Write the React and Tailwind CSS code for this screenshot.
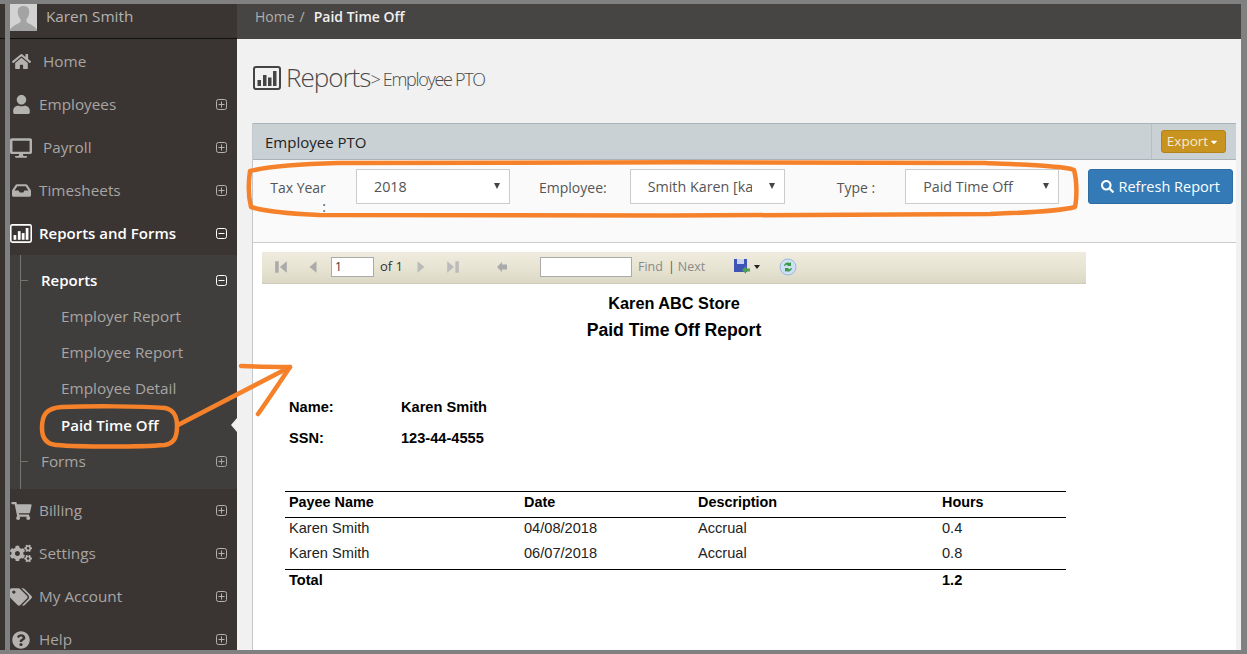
import { FaHome, FaUser, FaDesktop, FaInbox, FaShoppingCart, FaCogs, FaTags, FaQuestionCircle, FaSearch, FaCaretDown } from "react-icons/fa";

const BoxChart = ({ className }) => (
  <svg viewBox="0 0 28 24" className={className} fill="none">
    <rect x="1" y="1" width="26" height="22" rx="2" stroke="currentColor" strokeWidth="2" />
    <rect x="4.5" y="14" width="3.5" height="6" fill="currentColor" />
    <rect x="10" y="9" width="3.5" height="11" fill="currentColor" />
    <rect x="15" y="11.5" width="3.5" height="8.5" fill="currentColor" />
    <rect x="20" y="5" width="3.5" height="15" fill="currentColor" />
  </svg>
);

const PlusBox = ({ open }) => (
  <svg viewBox="0 0 11 11" className="w-[11px] h-[11px]" fill="none" stroke="currentColor" strokeWidth="1">
    <rect x="0.5" y="0.5" width="10" height="10" rx="2" />
    <path d="M2.5 5.5h6" />
    {!open && <path d="M5.5 2.5v6" />}
  </svg>
);

const Avatar = () => (
  <div className="w-[27px] h-[27px] bg-[#d2d2d2] overflow-hidden">
    <svg viewBox="0 0 27 27" className="w-full h-full">
      <path d="M13.5 2c-4 0-6 2.6-5.700 6.500.2 3 1.200 5 2.700 6.500v3c-2.500 2-7 3-10.500 7.500V27h27v-1.500c-3.500-4.500-8-5.500-10.500-7.500v-3c1.500-1.500 2.500-3.500 2.700-6.500C19.500 4.600 17.500 2 13.500 2z" fill="#a3a3a3" />
    </svg>
  </div>
);

const MainItem = ({ icon, label, iconGap, active, open, noToggle }) => (
  <div className={`flex items-center h-[43px] pr-[10px] ${active ? "text-[15px] text-white font-semibold" : "text-[15.300px] text-[#a8a5a3]"}`}>
    <span className={`flex justify-center items-center w-[22px] shrink-0 ${active ? "text-white" : "text-[#b4b2b0]"}`}>{icon}</span>
    <span className={`flex-1 ${iconGap}`}>{label}</span>
    {!noToggle && <span className={active ? "text-white" : "text-[#b4b2b0]"}><PlusBox open={open} /></span>}
  </div>
);

const SubItem = ({ label, bold, active, open, tick, toggle, className = "" }) => (
  <div className={`relative flex items-center h-[36px] pr-[10px] ${tick ? "pl-[31px]" : "pl-[51px]"} ${bold || active ? "text-[15px] text-white font-semibold" : "text-[15.300px] text-[#a8a5a3]"} ${className}`}>
    {tick && <span className="absolute left-[10px] top-[18px] w-[8px] h-px bg-[#77736f]" />}
    <span className={`flex-1 ${bold || active ? "" : "pt-px"}`}>{label}</span>
    {toggle && <PlusBox open={open} />}
    {active && <span className="absolute right-0 top-[11px] border-y-[7px] border-r-[6px] border-y-transparent border-r-[#f1f1f1]" />}
  </div>
);

const Select = ({ value, className }) => (
  <div className={`relative flex items-center h-[35px] pl-[17px] pt-[1px] bg-white border border-[#ccc] text-[14.300px] text-[#555] overflow-hidden ${className}`}>
    <span className="whitespace-nowrap">{value}</span>
    <span className="absolute right-0 top-0 h-full w-[32px] bg-white" />
    <span className="absolute right-[9px] top-[13px] border-x-[3px] border-t-[6px] border-x-transparent border-t-[#444]" />
  </div>
);

const columns = "grid grid-cols-[235px_174px_244px_128px] pl-[4px]";

const rows = [
  { name: "Karen Smith", date: "04/08/2018", desc: "Accrual", hours: "0.4" },
  { name: "Karen Smith", date: "06/07/2018", desc: "Accrual", hours: "0.8" },
];

const App = () => {
  return (
    <div className="relative flex w-[1247px] h-[654px] overflow-hidden bg-[#808080] font-['Open_Sans',sans-serif]">
      {/* left edge of the window behind */}
      <div className="w-[5px] mt-[4px] mb-[4px] bg-[#39342f] relative">
        <div className="absolute left-0 right-0 top-[34px] h-px bg-[#111]" />
      </div>
      <div className="ml-[5px] flex flex-col w-[1231px] my-[4px] flex-none">
        <div className="flex flex-1 min-h-0">
          {/* sidebar */}
          <aside className="w-[227px] shrink-0 bg-[#3a3533] overflow-hidden">
            <div className="flex items-start h-[35px] mb-px border-b border-[#111]">
              <Avatar />
              <span className="ml-[9px] text-[15.300px] leading-[25px] text-[#b4b2b0]">Karen Smith</span>
            </div>
            <MainItem icon={<FaHome className="w-[19px] h-[17px]" />} label="Home" iconGap="ml-[11px]" noToggle />
            <MainItem icon={<FaUser className="w-[17px] h-[19px]" />} label="Employees" iconGap="ml-[7px]" />
            <MainItem icon={<FaDesktop className="w-[23px] h-[20px]" />} label="Payroll" iconGap="ml-[11px]" />
            <MainItem icon={<FaInbox className="w-[19px] h-[17px]" />} label="Timesheets" iconGap="ml-[7px]" />
            <MainItem icon={<BoxChart className="w-[22px] h-[19px]" />} label="Reports and Forms" iconGap="ml-[7px]" active open />
            <div className="relative bg-[#403e3d] pt-[7px] pb-[10px]">
              <span className="absolute left-[10px] top-0 bottom-0 w-px bg-[#77736f]" />
              <SubItem label="Reports" bold open tick toggle />
              <SubItem label="Employer Report" />
              <SubItem label="Employee Report" />
              <SubItem label="Employee Detail" />
              <SubItem label="Paid Time Off" active className="mt-px" />
              <SubItem label="Forms" tick toggle />
            </div>
            <MainItem icon={<FaShoppingCart className="w-[21px] h-[18px]" />} label="Billing" iconGap="ml-[7px]" />
            <MainItem icon={<FaCogs className="w-[22px] h-[19px]" />} label="Settings" iconGap="ml-[7px]" />
            <MainItem icon={<FaTags className="w-[22px] h-[18px]" />} label="My Account" iconGap="ml-[7px]" />
            <MainItem icon={<FaQuestionCircle className="w-[18px] h-[18px]" />} label="Help" iconGap="ml-[7px]" />
          </aside>

          {/* main column */}
          <main className="flex-1 min-w-0 bg-[#f1f1f1] flex flex-col">
            <div className="h-[35px] shrink-0 bg-[#474543] pl-[18px] pt-[1px] text-[14px] leading-[24px] text-[#b0aeac]">
              Home<span className="ml-[5px]">/</span>
              <span className="ml-[9px] text-[#f0f0f0] font-semibold">Paid Time Off</span>
            </div>

            <div className="flex items-center h-[84px] shrink-0 pl-[16px] pb-[7px] text-[#4a4a4a]">
              <BoxChart className="w-[28px] h-[24px] text-[#444]" />
              <span className="ml-[5px] text-[26px] font-light tracking-[-1px]">Reports</span>
              <span className="text-[18px] font-light tracking-[-1.300px] mt-[3px]">&gt; Employee PTO</span>
            </div>

            <section className="flex-1 min-h-0 ml-[15px] mr-[5px] border-l border-[#c4c8ca] flex flex-col">
              <div className="flex items-center justify-between h-[37px] shrink-0 bg-[#c9d1d4] border-y border-[#aab4b8] pl-[12px] text-[#222] text-[15px]">
                <span className="pt-px">Employee PTO</span>
                <div className="flex items-center justify-center h-full w-[85px] pr-[2px] border-l border-[#b6bfc2]">
                  <span className="flex items-center h-[23px] w-[65px] justify-center rounded-[3px] bg-[#c8931f] border border-[#b48218] text-[13.500px] text-[#f6ebd2]">
                    Export<FaCaretDown className="w-[10px] h-[10px] ml-[1px] text-white" />
                  </span>
                </div>
              </div>

              <div className="h-[83px] shrink-0 bg-[#fafafa] border-b border-[#ccc] flex items-start pt-[9px] text-[14px] text-[#555]">
                <div className="w-[58px] ml-[16px] leading-[20px] pt-[9px] text-center">Tax Year<br /><span className="block text-right pr-[1px] -mt-px">:</span></div>
                <Select value="2018" className="w-[154px] ml-[29px]" />
                <span className="ml-[29px] mt-[9px] leading-[20px]">Employee:</span>
                <Select value="Smith Karen [karen]" className="w-[155px] ml-[23px]" />
                <span className="ml-[52px] mt-[9px] leading-[20px]">Type :</span>
                <Select value="Paid Time Off" className="w-[154px] ml-[30px]" />
                <button className="flex items-center justify-center gap-[4px] h-[35px] w-[145px] ml-[29px] rounded-[3px] bg-[#337ab7] border border-[#2e6da4] text-white text-[14.500px]">
                  <FaSearch className="w-[13px] h-[13px]" />Refresh Report
                </button>
              </div>

              {/* report viewer */}
              <div className="flex-1 min-h-0 bg-white pt-[9px] font-['Liberation_Sans',sans-serif] text-[14.600px] text-[#111]">
                <div className="flex items-center w-[824px] h-[32px] ml-[9px] pb-px bg-gradient-to-b from-[#efebde] via-[#e8e4d3] to-[#dcd8c6] border-b border-[#cfcbbb] text-[#333] relative">
                  <svg viewBox="0 0 12 12" className="w-[14px] h-[14px] ml-[12px] text-[#aaa]" fill="currentColor"><path d="M1 1h3v10H1zM11 1v10L5 6z" /></svg>
                  <svg viewBox="0 0 12 12" className="w-[14px] h-[14px] ml-[18px] text-[#aaa]" fill="currentColor"><path d="M9 1v10L3 6z" /></svg>
                  <span className="ml-[11px] w-[43px] h-[20px] bg-white border border-[#aaa] pl-[3px] text-[12px] leading-[18px] font-['Open_Sans',sans-serif]">1</span>
                  <span className="ml-[6px] text-[13px] font-['Open_Sans',sans-serif]">of 1</span>
                  <svg viewBox="0 0 12 12" className="w-[14px] h-[14px] ml-[11px] text-[#bbb]" fill="currentColor"><path d="M3 1v10l6-5z" /></svg>
                  <svg viewBox="0 0 12 12" className="w-[14px] h-[14px] ml-[18px] text-[#bbb]" fill="currentColor"><path d="M1 1v10l6-5zM8 1h3v10H8z" /></svg>
                  <svg viewBox="0 0 12 12" className="w-[12px] h-[12px] ml-[36px] text-[#aaa]" fill="currentColor"><path d="M6 1L1 6l5 5V8.500h5v-5H6z" /></svg>
                  <span className="ml-[32px] w-[92px] h-[20px] bg-white border border-[#aaa]" />
                  <span className="ml-[6px] text-[12.500px] text-[#8a8a8a] font-['Open_Sans',sans-serif]">Find</span>
                  <span className="ml-[5px] text-[12.500px] text-[#555] font-['Open_Sans',sans-serif]">|</span>
                  <span className="ml-[3px] text-[12.500px] text-[#8a8a8a] font-['Open_Sans',sans-serif]">Next</span>
                  <svg viewBox="0 0 18 18" className="w-[18px] h-[18px] ml-[28px]">
                    <path d="M1 1h13v13H1z" fill="#3f55b5" />
                    <path d="M4 1h7v5H4z" fill="#c9d2f2" />
                    <path d="M9 12l4-4v2.500h4v3h-4V16z" fill="#4fa04a" />
                  </svg>
                  <span className="ml-[3px] border-x-[3px] border-t-[4px] border-x-transparent border-t-[#222]" />
                  <svg viewBox="0 0 18 18" className="w-[18px] h-[18px] ml-[19px]">
                    <circle cx="9" cy="9" r="8" fill="#cfe0f5" stroke="#9bb8de" />
                    <path d="M5 8a4 4 0 0 1 6-3l1-1v4H8l1-1a2.500 2.500 0 0 0-3 1z" fill="#3a9a45" />
                    <path d="M13 10a4 4 0 0 1-6 3l-1 1v-4h4l-1 1a2.500 2.500 0 0 0 3-1z" fill="#3a9a45" />
                  </svg>
                </div>

                <div className="w-[824px] ml-[9px] text-center font-bold">
                  <div className="mt-[10px] text-[16.300px] leading-[18px] text-black">Karen ABC Store</div>
                  <div className="mt-[8px] text-[17.600px] leading-[20px] text-black">Paid Time Off Report</div>
                </div>

                <div className="ml-[36px] mt-[57px] font-bold text-black">
                  <div className="flex leading-[20px]"><span className="w-[112px]">Name:</span><span>Karen Smith</span></div>
                  <div className="flex leading-[20px] mt-[11px]"><span className="w-[112px]">SSN:</span><span>123-44-4555</span></div>
                </div>

                <div className="w-[781px] ml-[32px] mt-[43px]">
                  <div className={`${columns} h-[27px] pb-[4px] items-center border-y border-black font-bold text-[14.400px] text-black`}>
                    <span>Payee Name</span><span>Date</span><span>Description</span><span>Hours</span>
                  </div>
                  <div className="border-b border-black h-[52px]">
                    <div className="-translate-y-[2px]">
                      {rows.map((row) => (
                        <div key={row.date} className={`${columns} h-[25px] items-center text-[#222]`}>
                          <span>{row.name}</span><span>{row.date}</span><span>{row.desc}</span><span>{row.hours}</span>
                        </div>
                      ))}
                    </div>
                  </div>
                  <div className={`${columns} h-[21px] items-center font-bold text-black`}>
                    <span>Total</span><span /><span /><span>1.2</span>
                  </div>
                </div>
              </div>
            </section>
          </main>
        </div>
      </div>

      {/* hand drawn annotations on top of the screenshot */}
      <svg className="absolute inset-0 w-[1247px] h-[654px] pointer-events-none" viewBox="0 0 1247 654" fill="none" stroke="#f5822a" strokeWidth="4.5" strokeLinecap="round" strokeLinejoin="round">
        <path d="M338 163C500 162 800 162 985 163C1030 165 1066 166 1074 170C1077 180 1077 198 1075 207C1060 211 1020 213 990 214C800 216 500 216 320 215C300 214 270 213 251 207C248 195 248 185 250 171C270 166 300 164 338 163Z" />
        <path d="M62 407C90 406 140 406 165 408C174 410 177 416 177 426C177 438 174 443 165 445C140 447 80 447 56 445C46 444 42 438 42 428C42 415 46 408 62 407Z" />
        <path d="M178 425L290 367" />
        <path d="M241 366C258 367 275 367 290 367C280 382 268 400 258 414" />
      </svg>
    </div>
  );
};

export default App;
